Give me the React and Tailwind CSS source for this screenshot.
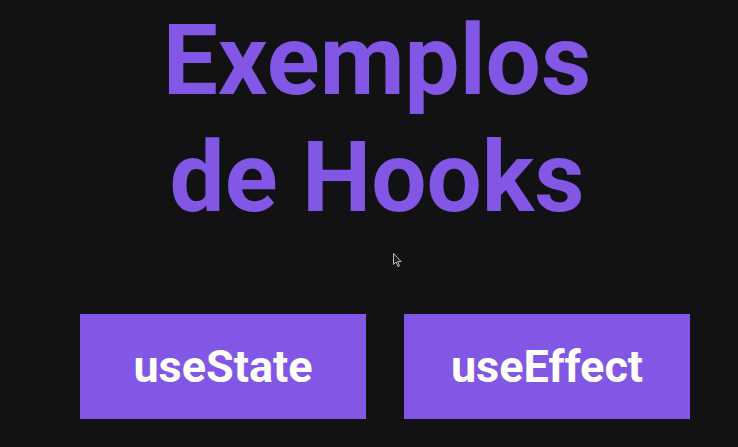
export default function App() {
  return (
    <div className="relative h-[447px] w-[738px] overflow-hidden bg-[#121114]">
      <h1 className="pl-[16px] pt-[2px] text-center font-['Roboto',sans-serif] text-[98px] font-bold leading-[117px] text-[#8257e5]">
        Exemplos
        <br />
        de Hooks
      </h1>

      <div className="mt-[78px] flex gap-[38px] pl-[80px]">
        <button className="flex h-[105px] w-[286px] items-center justify-center bg-[#8257e5] font-['Roboto',sans-serif] text-[45px] font-bold text-white">
          useState
        </button>
        <button className="flex h-[105px] w-[286px] items-center justify-center bg-[#8257e5] font-['Roboto',sans-serif] text-[45px] font-bold text-white">
          useEffect
        </button>
      </div>

      {/* mouse cursor */}
      <svg
        className="absolute left-[393px] top-[253px]"
        width="10"
        height="15"
        viewBox="0 0 10 15"
      >
        <path
          d="M0.5 0.5 L0.5 11.5 L3 9 L5 13.5 L6.5 12.8 L4.6 8.6 L8.2 8.6 Z"
          fill="#1a191c"
          stroke="#bdbdbd"
          strokeWidth="1"
        />
      </svg>
    </div>
  );
}
